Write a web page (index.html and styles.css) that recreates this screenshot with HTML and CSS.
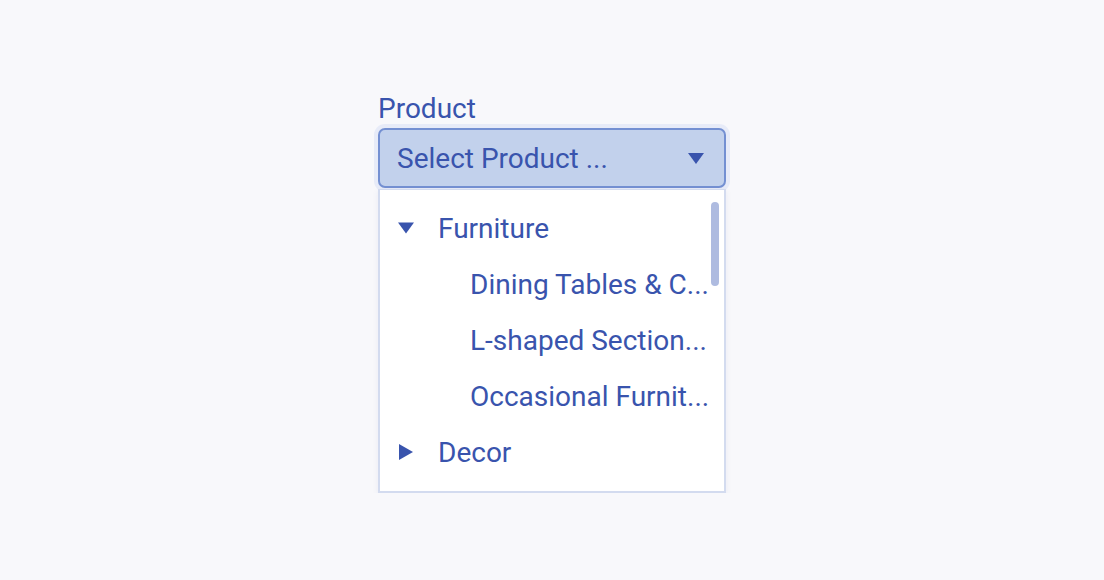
FILE: index.html
```html
<!DOCTYPE html>
<html lang="en">
<head>
    <meta charset="UTF-8">
    <meta name="viewport" content="width=device-width, initial-scale=1.0">
    <title>Product Picker</title>
    <link rel="stylesheet" href="styles.css">
</head>
<body>
    <div class="field">
        <label class="field-label" for="product">Product</label>
        <div class="select" id="product">
            <span class="select-text">Select Product ...</span>
            <svg class="caret" width="16" height="11" viewBox="0 0 16 11"><path d="M0 0 H16 L8 11 Z" fill="#3954ad"/></svg>
        </div>
        <div class="dropdown">
            <ul class="tree">
                <li class="node">
                    <svg class="toggle" width="16" height="16" viewBox="0 0 16 16"><path d="M0 2.5 H16 L8 13.5 Z" fill="#3954ad"/></svg>
                    <span class="node-text">Furniture</span>
                </li>
                <li class="node child" title="Dining Tables &amp; Chairs"><span class="node-text">Dining Tables &amp; C...</span></li>
                <li class="node child" title="L-shaped Sectional Sofas"><span class="node-text">L-shaped Section...</span></li>
                <li class="node child" title="Occasional Furniture"><span class="node-text">Occasional Furnit...</span></li>
                <li class="node">
                    <svg class="toggle" width="16" height="16" viewBox="0 0 16 16"><path d="M1 0 L15 8 L1 16 Z" fill="#3954ad"/></svg>
                    <span class="node-text">Decor</span>
                </li>
            </ul>
            <div class="scroll-thumb"></div>
        </div>
    </div>
</body>
</html>
```

FILE: styles.css
```css
body {
    font-family: Roboto, "Noto Sans", sans-serif;
    background-color: #f8f8fb;
    margin: 0;
    padding: 0;
    color: #3954ad;
}
.field {
    width: 348px;
    margin: 93px auto 0 378px;
    position: relative;
}
.field-label {
    display: block;
    font-size: 28px;
    line-height: 32px;
    margin-bottom: 3px;
}
.select {
    box-sizing: border-box;
    height: 60px;
    display: flex;
    align-items: center;
    justify-content: space-between;
    padding: 0 20px 0 17px;
    background: #c2d1ec;
    border: 2px solid #7490d2;
    border-radius: 7px;
    box-shadow: 0 0 0 4px #e7ebf8;
    font-size: 28px;
}
.dropdown {
    box-sizing: border-box;
    position: relative;
    margin-top: 1px;
    height: 304px;
    background: #fff;
    border: 2px solid #d3dbef;
    border-top-width: 1px;
    box-shadow: 0 2px 6px rgba(60, 80, 150, 0.08);
    overflow: hidden;
}
.tree {
    list-style: none;
    margin: 0;
    padding: 10px 0 0 0;
}
.node {
    height: 56px;
    display: flex;
    align-items: center;
    padding-left: 18px;
    font-size: 28px;
    white-space: nowrap;
}
.toggle {
    flex: none;
    margin-right: 24px;
}
.child {
    padding-left: 90px;
}
.scroll-thumb {
    position: absolute;
    top: 12px;
    right: 5px;
    width: 8px;
    height: 84px;
    border-radius: 4px;
    background: #aebbe0;
}
```
